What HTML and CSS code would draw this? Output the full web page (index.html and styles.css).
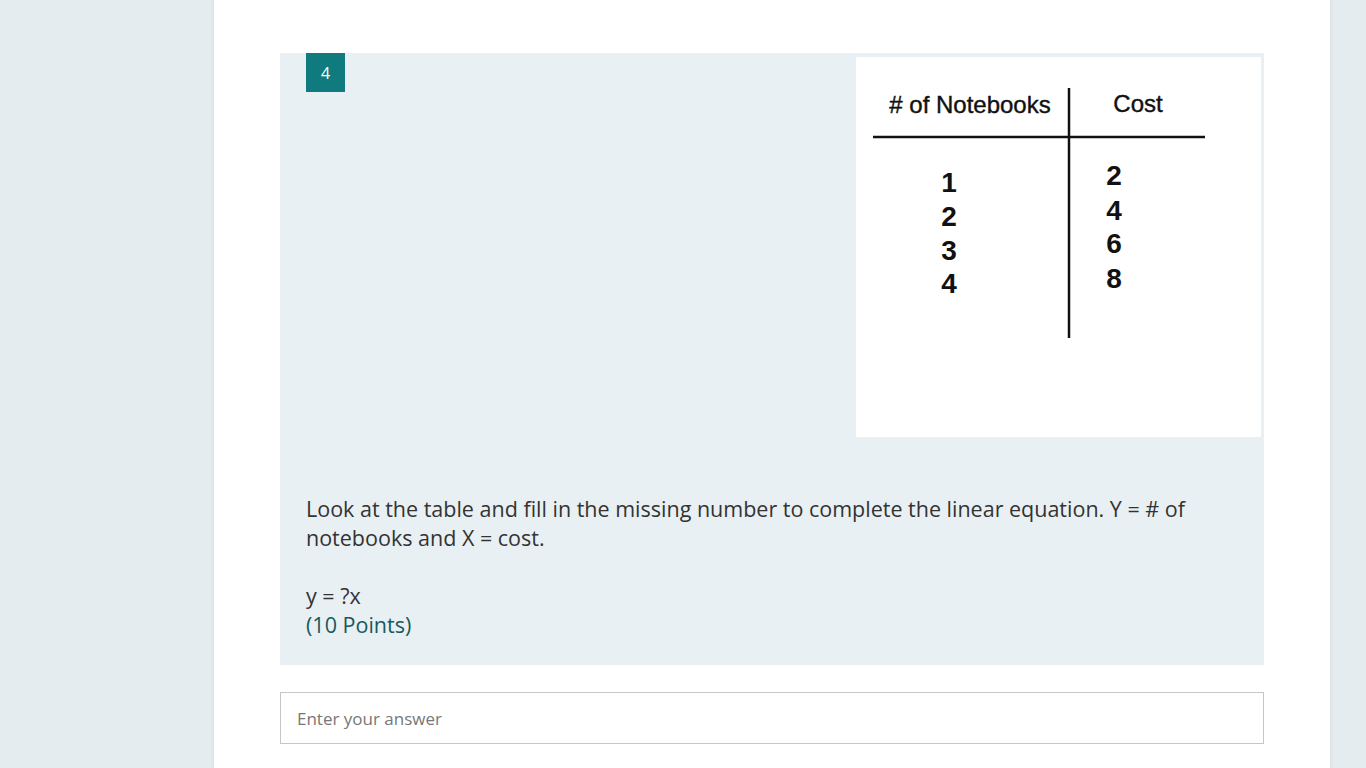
FILE: index.html
```html
<!DOCTYPE html>
<html lang="en">
<head>
<meta charset="utf-8">
<title>Question 4</title>
<link rel="stylesheet" href="styles.css">
</head>
<body>
<div class="card">
  <div class="question">
    <div class="q-head">
      <div class="badge">4</div>
      <div class="figure">
        <svg width="405" height="380" viewBox="0 0 405 380" xmlns="http://www.w3.org/2000/svg">
          <rect x="0" y="0" width="405" height="380" fill="#fff"/>
          <line x1="17" y1="80" x2="349" y2="80" stroke="#111" stroke-width="2.5"/>
          <line x1="213" y1="31" x2="213" y2="281" stroke="#111" stroke-width="2.5"/>
          <text x="114" y="56" text-anchor="middle" class="th">#&#160;of Notebooks</text>
          <text x="282" y="55" text-anchor="middle" class="th">Cost</text>
          <text x="93" y="135" text-anchor="middle" class="td">1</text>
          <text x="93" y="169" text-anchor="middle" class="td">2</text>
          <text x="93" y="203" text-anchor="middle" class="td">3</text>
          <text x="93" y="236" text-anchor="middle" class="td">4</text>
          <text x="258" y="128" text-anchor="middle" class="td">2</text>
          <text x="258" y="163" text-anchor="middle" class="td">4</text>
          <text x="258" y="196" text-anchor="middle" class="td">6</text>
          <text x="258" y="231" text-anchor="middle" class="td">8</text>
        </svg>
      </div>
    </div>
    <div class="q-text">
      <p>Look at the table and fill in the missing number to complete the linear equation. Y = # of notebooks and X = cost.</p>
      <p class="gap">y = ?x</p>
      <p class="points">(10 Points)</p>
    </div>
  </div>
  <div class="answer">Enter your answer</div>
</div>
</body>
</html>
```
FILE: styles.css
```css
html, body {
  margin: 0;
  padding: 0;
}
body {
  background: #e5ecef;
  font-family: "Open Sans", "Noto Sans", sans-serif;
  height: 768px;
  overflow: hidden;
}
.card {
  margin-left: 214px;
  width: 1116px;
  box-sizing: border-box;
  min-height: 768px;
  background: #fff;
  padding: 53px 66px 0 66px;
  box-shadow: -2px 0 3px rgba(0,0,0,0.04), 2px 0 3px rgba(0,0,0,0.04);
}
.question {
  background: #e9f0f3;
  padding: 0 0 26px 26px;
}
.q-head {
  display: flex;
  justify-content: space-between;
  align-items: flex-start;
}
.badge {
  width: 39px;
  height: 39px;
  background: #0f7b7f;
  color: #fff;
  font-size: 16px;
  display: flex;
  align-items: center;
  justify-content: center;
}
.figure {
  margin-top: 4px;
  margin-right: 3px;
  line-height: 0;
}
.figure svg {
  display: block;
}
.th {
  font-family: "Liberation Sans", Arial, sans-serif;
  font-size: 24px;
  fill: #111;
  stroke: #111;
  stroke-width: 0.4px;
}
.td {
  font-family: "Liberation Sans", Arial, sans-serif;
  font-size: 28px;
  font-weight: bold;
  fill: #111;
}
.q-text {
  padding-top: 57px;
  padding-right: 26px;
  font-size: 21.5px;
  line-height: 29px;
  color: #333;
}
.q-text p {
  margin: 0;
}
.q-text .gap {
  margin-top: 29px;
}
.points {
  color: #175a5c;
}
.answer {
  margin-top: 27px;
  height: 52px;
  box-sizing: border-box;
  border: 1px solid #c6c6c6;
  background: #fff;
  padding-left: 16px;
  display: flex;
  align-items: center;
  font-size: 17px;
  color: #777;
}
```
